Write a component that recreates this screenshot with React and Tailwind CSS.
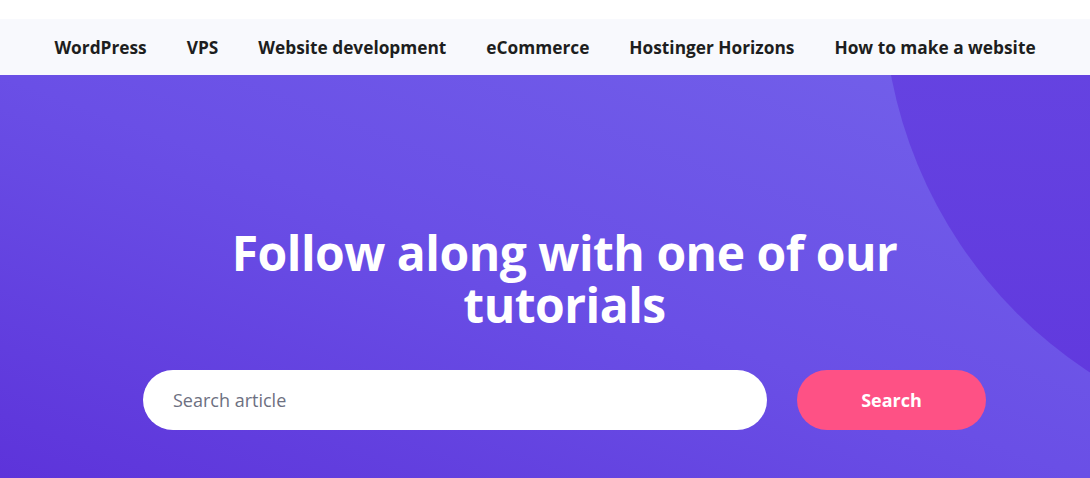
export default function App() {
  const links = [
    "WordPress",
    "VPS",
    "Website development",
    "eCommerce",
    "Hostinger Horizons",
    "How to make a website",
  ];

  return (
    <div className="w-[1090px] h-[478px] overflow-hidden bg-white font-['Open_Sans',sans-serif]">
      {/* franja blanca superior */}
      <div className="h-[19px] bg-white" />

      {/* barra de temas */}
      <nav className="h-[56px] bg-[#f8f9fd] flex items-center justify-center gap-10 pt-[1px]">
        {links.map((l) => (
          <a key={l} href="#" className="text-[17.3px] font-bold text-[#1d1e20]">
            {l}
          </a>
        ))}
      </nav>

      {/* hero */}
      <section className="relative h-[403px] overflow-hidden bg-gradient-to-tr from-[#5d33da] via-[#6a4fe6] to-[#7361ea]">
        {/* círculo decorativo */}
        <div className="absolute left-[883px] top-[-542px] w-[914px] h-[914px] rounded-full bg-gradient-to-b from-[#6a4ee6] to-[#5f34dc] opacity-90" />

        <div className="relative flex flex-col items-center pl-[39px] pt-[152px]">
          <h1 className="w-[700px] text-center text-[48px] leading-[52px] font-bold text-white tracking-[-0.5px]">
            Follow along with one of our tutorials
          </h1>
          <div className="mt-[39px] flex gap-[30px]">
            <input
              placeholder="Search article"
              className="w-[624px] h-[60px] rounded-full bg-white px-[30px] text-[18px] text-[#1d1e20] placeholder:text-[#6d7081] outline-none"
            />
            <button className="w-[189px] h-[60px] rounded-full bg-[#fe5185] text-white text-[18px] font-bold">
              Search
            </button>
          </div>
        </div>
      </section>
    </div>
  );
}
